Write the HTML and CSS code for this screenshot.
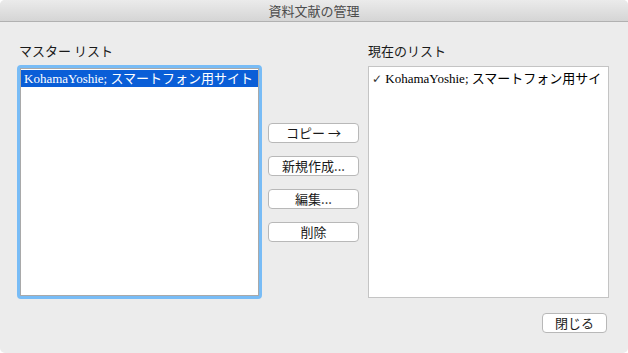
FILE: index.html
```html
<!DOCTYPE html>
<html lang="ja">
<head>
  <meta charset="UTF-8">
  <title>資料文献の管理</title>
  <link rel="stylesheet" href="styles.css">
</head>
<body>
  <div class="window">
    <div class="titlebar">資料文献の管理</div>
    <div class="content">
      <div class="columns">
        <div class="col-left">
          <div class="label">マスター リスト</div>
          <div class="ring">
            <div class="listbox">
              <div class="item selected">KohamaYoshie; スマートフォン用サイト</div>
            </div>
          </div>
        </div>
        <div class="col-buttons">
          <button class="btn">コピー →</button>
          <button class="btn">新規作成...</button>
          <button class="btn">編集...</button>
          <button class="btn">削除</button>
        </div>
        <div class="col-right">
          <div class="label">現在のリスト</div>
          <div class="listbox plain">
            <div class="item"><span class="check">✓</span> KohamaYoshie; スマートフォン用サイ</div>
          </div>
        </div>
      </div>
      <div class="footer">
        <button class="btn close">閉じる</button>
      </div>
    </div>
  </div>
</body>
</html>
```

FILE: styles.css
```css
body { margin: 0; background: #ffffff; font-family: "Noto Sans CJK JP", "Liberation Sans", sans-serif; }
.window { width: 628px; height: 353px; background: #ececec; border-radius: 5px; overflow: hidden; }
.titlebar { height: 21px; line-height: 21px; text-align: center; font-size: 13px; color: #4d4d4d; background: linear-gradient(#ebebeb, #d5d5d5); border-bottom: 1px solid #b1b1b1; }
.content { padding: 21px 19px 0 17px; }
.columns { display: flex; }
.col-left { width: 245px; margin-right: 6px; flex-shrink: 0; }
.col-buttons { width: 91px; margin-right: 9px; flex-shrink: 0; padding-top: 80px; display: flex; flex-direction: column; gap: 13px; }
.col-right { width: 241px; flex-shrink: 0; }
.label { font-size: 13px; line-height: 16px; height: 16px; color: #1a1a1a; padding-left: 2px; margin-bottom: 6px; }
.col-right .label { padding-left: 0; margin-bottom: 7px; }
.ring { border: 3px solid #78bcf6; border-radius: 4px; height: 234px; box-sizing: border-box; }
.listbox { background: #fff; border: 1px solid #a9a9a9; height: 100%; box-sizing: border-box; overflow: hidden; padding-top: 1px; }
.listbox.plain { border-color: #c4c4c4; height: 232px; padding-top: 3px; }
.item { font-family: "Liberation Serif", "Noto Sans CJK JP", serif; font-size: 13px; line-height: 17px; height: 17px; white-space: nowrap; color: #000; padding-left: 3px; }
.item.selected { background: #0a5ed7; color: #fff; }
.check { font-family: "DejaVu Sans", sans-serif; font-size: 12px; color: #333; }
.btn { font-family: "Noto Sans CJK JP", sans-serif; font-size: 13px; height: 20px; line-height: 18px; padding: 0; background: #fff; color: #1a1a1a; border: 1px solid #b8b8b8; border-radius: 4px; box-sizing: border-box; }
.footer { display: flex; justify-content: flex-end; margin-top: 14px; padding-right: 2px; }
.close { width: 65px; }
```
